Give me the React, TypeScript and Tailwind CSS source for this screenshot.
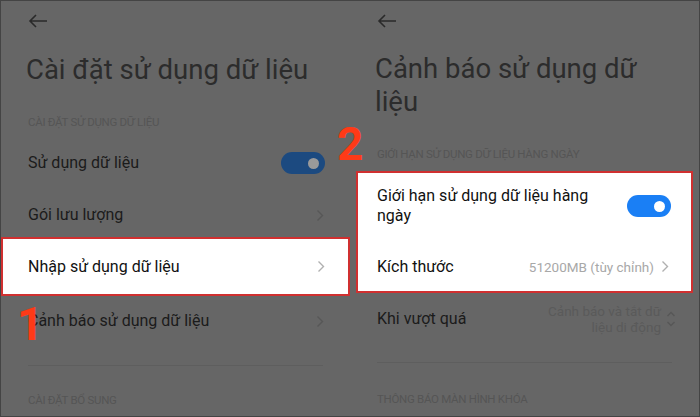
import React from "react";

const font = { fontFamily: "Roboto, 'Noto Sans', sans-serif" };

function BackArrow() {
  return (
    <svg width="20" height="14" viewBox="0 0 20 14" fill="none" stroke="#2a2a2a" strokeWidth="1.6">
      <path d="M19 7H2M8 1L2 7l6 6" />
    </svg>
  );
}

function Chevron({ color }: { color: string }) {
  return (
    <svg width="8" height="13" viewBox="0 0 8 13" fill="none" stroke={color} strokeWidth="1.4">
      <path d="M1.5 1.5l5 5-5 5" />
    </svg>
  );
}

function UpDown({ color }: { color: string }) {
  return (
    <svg width="10" height="18" viewBox="0 0 10 18" fill="none" stroke={color} strokeWidth="1.4">
      <path d="M1.5 6l3.5-3.5L8.5 6M1.5 12l3.5 3.5 3.5-3.5" />
    </svg>
  );
}

function Toggle({ bright }: { bright?: boolean }) {
  return (
    <div
      className={`flex h-[22px] w-[44px] items-center justify-end rounded-full pr-[6px] ${
        bright ? "bg-[#1a7ff5]" : "bg-[#1c4a80]"
      }`}
    >
      <div className={`h-[11px] w-[11px] rounded-full ${bright ? "bg-white" : "bg-[#9a9a9a]"}`} />
    </div>
  );
}

function Header({ children }: { children: React.ReactNode }) {
  return <div className="text-[11.5px] uppercase tracking-[-0.3px] text-[#555]">{children}</div>;
}

export default function App() {
  return (
    <div className="flex h-[417px] w-[700px] overflow-hidden border border-[#444] bg-[#666]" style={font}>
      {/* left screen */}
      <div className="relative flex w-[350px] flex-col">
        <div className="pl-[27px] pt-[13px]">
          <BackArrow />
        </div>
        <div className="mt-[24px] pl-[25px] text-[27.5px] leading-[36px] text-[#2c2c2c]">Cài đặt sử dụng dữ liệu</div>
        <div className="mt-[26px] pl-[27px]">
          <Header>Cài đặt sử dụng dữ liệu</Header>
        </div>
        <div className="mt-[6px] flex h-[52px] items-center justify-between pl-[27px] pr-[25px]">
          <span className="text-[16px] text-[#1b1b1b]">Sử dụng dữ liệu</span>
          <Toggle />
        </div>
        <div className="flex h-[52px] items-center justify-between pl-[27px] pr-[26px]">
          <span className="text-[16px] text-[#1b1b1b]">Gói lưu lượng</span>
          <Chevron color="#575757" />
        </div>
        <div className="-mt-[4px] flex h-[59px] items-center justify-between border-2 border-[#d03030] bg-white pl-[25px] pr-[23px]">
          <span className="text-[16px] text-[#111]">Nhập sử dụng dữ liệu</span>
          <Chevron color="#b0b0b0" />
        </div>
        <div className="flex h-[50px] items-center justify-between pl-[27px] pr-[26px]">
          <span className="text-[16px] text-[#1b1b1b]">Cảnh báo sử dụng dữ liệu</span>
          <Chevron color="#575757" />
        </div>
        <div className="mx-[27px] mt-[19px] h-px bg-[#5e5e5e]" />
        <div className="mt-[26px] pl-[27px]">
          <Header>Cài đặt bổ sung</Header>
        </div>
        <span className="absolute left-[16px] top-[300px] text-[46px] font-bold leading-none text-[#ff3a17]">1</span>
      </div>

      {/* right screen */}
      <div className="relative flex w-[350px] flex-col">
        <div className="pl-[27px] pt-[13px]">
          <BackArrow />
        </div>
        <div className="mt-[24px] pl-[25px] pr-[20px] text-[27.5px] leading-[33px] text-[#2c2c2c]">
          Cảnh báo sử dụng dữ liệu
        </div>
        <div className="mt-[28px] pl-[27px]">
          <Header>Giới hạn sử dụng dữ liệu hàng ngày</Header>
        </div>
        <div className="mx-[6px] mt-[8px] border-2 border-[#d03030] bg-white">
          <div className="flex h-[66px] items-center justify-between pl-[19px] pr-[20px]">
            <span className="w-[230px] text-[16px] leading-[20px] text-[#111]">Giới hạn sử dụng dữ liệu hàng ngày</span>
            <Toggle bright />
          </div>
          <div className="flex h-[52px] items-center justify-between pl-[19px] pr-[22px] pt-[3px]">
            <span className="text-[16px] text-[#111]">Kích thước</span>
            <div className="flex items-center gap-[7px]">
              <span className="text-[13.5px] text-[#a8a8a8]">51200MB (tùy chỉnh)</span>
              <Chevron color="#b0b0b0" />
            </div>
          </div>
        </div>
        <div className="flex h-[52px] items-center justify-between pl-[27px] pr-[23px]">
          <span className="text-[16px] text-[#1b1b1b]">Khi vượt quá</span>
          <div className="flex items-center gap-[5px]">
            <span className="text-right text-[13.5px] leading-[16px] text-[#5a5a5a]">
              Cảnh báo và tắt dữ
              <br />
              liệu di động
            </span>
            <UpDown color="#575757" />
          </div>
        </div>
        <div className="mx-[27px] mt-[17px] h-px bg-[#5e5e5e]" />
        <div className="mt-[28px] pl-[27px]">
          <Header>Thông báo màn hình khóa</Header>
        </div>
        <span className="absolute -left-[13px] top-[120px] text-[46px] font-bold leading-none text-[#ff3a17]">2</span>
      </div>
    </div>
  );
}
